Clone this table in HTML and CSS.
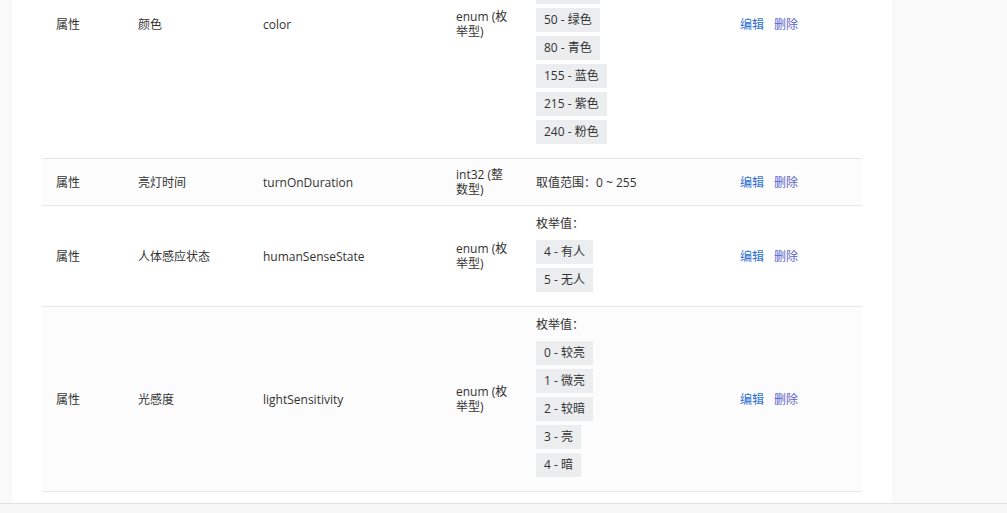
FILE: index.html
```html
<!DOCTYPE html>
<html lang="zh-CN">
<head>
    <meta charset="UTF-8">
    <meta name="viewport" content="width=device-width, initial-scale=1.0">
    <title>功能定义</title>
    <link rel="stylesheet" href="styles.css">
</head>
<body>
    <div class="layout">
        <div class="content">
            <div class="panel">
                <table class="func-table">
                    <colgroup>
                        <col class="c-type">
                        <col class="c-name">
                        <col class="c-id">
                        <col class="c-data">
                        <col class="c-define">
                        <col class="c-op">
                    </colgroup>
                    <tbody>
                        <tr>
                            <td>属性</td>
                            <td>颜色</td>
                            <td>color</td>
                            <td>enum (枚举型)</td>
                            <td>
                                <div class="enum-label">枚举值：</div>
                                <div class="tags">
                                    <span class="tag">0 - 红色</span>
                                    <span class="tag">20 - 橙色</span>
                                    <span class="tag">35 - 黄色</span>
                                    <span class="tag">50 - 绿色</span>
                                    <span class="tag">80 - 青色</span>
                                    <span class="tag">155 - 蓝色</span>
                                    <span class="tag">215 - 紫色</span>
                                    <span class="tag">240 - 粉色</span>
                                </div>
                            </td>
                            <td><a class="link edit" href="#">编辑</a><a class="link del" href="#">删除</a></td>
                        </tr>
                        <tr>
                            <td>属性</td>
                            <td>亮灯时间</td>
                            <td>turnOnDuration</td>
                            <td>int32 (整数型)</td>
                            <td>取值范围：0 ~ 255</td>
                            <td><a class="link edit" href="#">编辑</a><a class="link del" href="#">删除</a></td>
                        </tr>
                        <tr>
                            <td>属性</td>
                            <td>人体感应状态</td>
                            <td>humanSenseState</td>
                            <td>enum (枚举型)</td>
                            <td>
                                <div class="enum-label">枚举值：</div>
                                <div class="tags">
                                    <span class="tag">4 - 有人</span>
                                    <span class="tag">5 - 无人</span>
                                </div>
                            </td>
                            <td><a class="link edit" href="#">编辑</a><a class="link del" href="#">删除</a></td>
                        </tr>
                        <tr>
                            <td>属性</td>
                            <td>光感度</td>
                            <td>lightSensitivity</td>
                            <td>enum (枚举型)</td>
                            <td>
                                <div class="enum-label">枚举值：</div>
                                <div class="tags">
                                    <span class="tag">0 - 较亮</span>
                                    <span class="tag">1 - 微亮</span>
                                    <span class="tag">2 - 较暗</span>
                                    <span class="tag">3 - 亮</span>
                                    <span class="tag">4 - 暗</span>
                                </div>
                            </td>
                            <td><a class="link edit" href="#">编辑</a><a class="link del" href="#">删除</a></td>
                        </tr>
                    </tbody>
                </table>
            </div>
        </div>
        <div class="footer"></div>
    </div>
</body>
</html>
```

FILE: styles.css
```css
html, body {
    margin: 0;
    height: 100%;
}
body {
    background-color: #f9f9f9;
    font-family: "Open Sans", "Noto Sans CJK SC", sans-serif;
    font-size: 12px;
    color: #333;
    overflow: hidden;
}
.layout {
    display: flex;
    flex-direction: column;
    height: 100%;
}
.content {
    padding-left: 12px;
}
.panel {
    display: flow-root;
    width: 820px;
    background-color: #fff;
    padding: 0 30px 11px;
}
.func-table {
    width: 820px;
    margin-top: -110px;
    border-collapse: collapse;
    table-layout: fixed;
}
.c-type { width: 82px; }
.c-name { width: 125px; }
.c-id { width: 193px; }
.c-data { width: 80px; }
.c-define { width: 204px; }
.c-op { width: 136px; }
.func-table td {
    padding: 8px 14px;
    line-height: 15px;
    vertical-align: middle;
    border-bottom: 1px solid #e8e8e8;
    word-break: break-all;
}
.func-table tr:nth-child(even) td {
    background-color: #fcfcfc;
}
.enum-label {
    line-height: 20px;
    margin-bottom: 6px;
}
.tags {
    display: flex;
    flex-direction: column;
    align-items: flex-start;
    padding-bottom: 2px;
}
.tag {
    display: block;
    height: 24px;
    line-height: 24px;
    padding: 0 8px;
    margin-bottom: 4px;
    background-color: #ebedef;
    white-space: nowrap;
}
.link {
    text-decoration: none;
    margin-right: 10px;
}
.edit {
    color: #2d6fd4;
}
.del {
    color: #5b5fcc;
}
.footer {
    flex: 1;
    border-top: 1px solid #e2e2e2;
    background-color: #f6f6f6;
}
```
